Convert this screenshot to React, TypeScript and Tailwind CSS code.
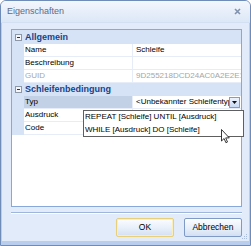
import React from "react";

const FONT = { fontFamily: '"Liberation Sans", Arial, sans-serif' };

function Toggle() {
  return (
    <div className="w-[12px] shrink-0 flex items-center justify-center">
      <div className="w-[7px] h-[7px] border border-[#8c97a8] bg-[#f4f6fa] flex items-center justify-center">
        <div className="w-[3px] h-px bg-[#333]" />
      </div>
    </div>
  );
}

function Category({ label, first }: { label: string; first?: boolean }) {
  return (
    <div className={`flex items-center bg-[#d6e3f6] ${first ? "h-[14px]" : "h-[13px]"}`}>
      <Toggle />
      <span className="pl-[1px] text-[9px] font-bold text-[#15428b] leading-none">{label}</span>
    </div>
  );
}

function Row({
  name,
  value,
  muted,
  selected,
  children,
}: {
  name: string;
  value?: string;
  muted?: boolean;
  selected?: boolean;
  children?: React.ReactNode;
}) {
  return (
    <div className="flex h-[13px]">
      <div className="w-[12px] shrink-0 bg-[#d6e3f6]" />
      <div
        className={`w-[109px] shrink-0 flex items-center pl-[1px] border-r border-b border-[#e6edf8] text-[8px] leading-none ${
          selected ? "bg-[#c3d1e6]" : "bg-white"
        } ${muted ? "text-[#a6a6a6]" : "text-black"}`}
      >
        {name}
      </div>
      <div
        className={`flex-1 min-w-0 flex items-center border-b border-[#e6edf8] text-[8px] leading-none whitespace-nowrap overflow-hidden ${
          muted ? "text-[#a6a6a6]" : "text-black"
        } ${children ? "" : "pl-[3px]"}`}
      >
        {children ?? value}
      </div>
    </div>
  );
}

function Combo() {
  return (
    <div className="flex h-full w-full items-center bg-white">
      <span className="flex-1 min-w-0 overflow-hidden pl-[3px] whitespace-nowrap">
        &lt;Unbekannter Schleifentyp&gt;
      </span>
      <div className="w-[11px] h-[11px] mr-px border border-[#7f9ccb] bg-gradient-to-b from-[#eef4fd] to-[#c9daf3] flex items-center justify-center">
        <svg width="5" height="3" viewBox="0 0 5 3">
          <path d="M0 0h5L2.5 3z" fill="#111" />
        </svg>
      </div>
    </div>
  );
}

function Cursor() {
  return (
    <svg
      className="absolute left-[209px] top-[99px]"
      width="9"
      height="15"
      viewBox="0 0 9 15"
    >
      <path
        d="M0.5 0.5v11.5l2.6-2.5 1.8 4.2 1.6-0.7-1.8-4.1h3.6z"
        fill="#fff"
        stroke="#222"
        strokeWidth="0.9"
        strokeLinejoin="round"
      />
    </svg>
  );
}

function Button({ label, primary }: { label: string; primary?: boolean }) {
  return (
    <button
      className={`w-[58px] h-[19px] rounded-[2px] border text-[8.5px] text-black bg-gradient-to-b from-[#fbfdff] via-[#e9f0fa] to-[#d3e0f2] ${
        primary ? "border-[#e8cf7a] shadow-[inset_0_0_0_1px_#fbeeb8]" : "border-[#7f9ac4]"
      }`}
    >
      {label}
    </button>
  );
}

export default function App() {
  return (
    <div
      className="relative w-[251px] h-[246px] flex flex-col overflow-hidden rounded-t-[6px] border border-[#6f8bb8] bg-[#e1ebfa]"
      style={FONT}
    >
      <div className="h-[22px] shrink-0 flex items-center justify-between pl-[6px] pr-[9px] bg-gradient-to-b from-[#f3f7fd] to-[#dce7f7] border-b border-[#d3e0f4]">
        <span className="text-[9px] text-[#5a6c8a]">Eigenschaften</span>
        <svg width="7" height="7" viewBox="0 0 7 7">
          <path d="M1 1l5 5M6 1l-5 5" stroke="#8091ad" strokeWidth="1.6" />
        </svg>
      </div>

      <div className="flex-1 flex flex-col pl-[9px] pr-[7px] pt-[6px] border-l-[2px] border-r-[2px] border-b-[4px] border-[#b9cdee] -mx-px">
        <div className="relative h-[178px] shrink-0 border border-[#89a8da] bg-white">
          <Category label="Allgemein" first />
          <Row name="Name" value="Schleife" />
          <Row name="Beschreibung" value="" />
          <Row name="GUID" value="9D255218DCD24AC0A2E2E11F" muted />
          <Category label="Schleifenbedingung" />
          <Row name="Typ" selected>
            <Combo />
          </Row>
          <Row name="Ausdruck" value="" />
          <Row name="Code" value="" />

          <div className="absolute left-[71px] top-[80px] w-[161px] h-[27px] border border-[#5f5f5f] bg-white flex flex-col text-[8px] leading-none text-black">
            <div className="h-[13px] flex items-center pl-[1px]">REPEAT [Schleife] UNTIL [Ausdruck]</div>
            <div className="h-[13px] flex items-center pl-[1px]">WHILE [Ausdruck] DO [Schleife]</div>
          </div>
          <Cursor />
        </div>

        <div className="mt-[5px] h-[2px] shrink-0 border-t border-[#9db6de] border-b-white border-b" />

        <div className="mt-[4px] flex justify-end gap-[10px] pr-0">
          <Button label="OK" primary />
          <Button label="Abbrechen" />
        </div>
      </div>

      <svg className="absolute right-[2px] bottom-[5px]" width="7" height="7" viewBox="0 0 7 7">
        <g fill="#a9bcd9">
          <rect x="5" y="1" width="1" height="1" />
          <rect x="3" y="3" width="1" height="1" />
          <rect x="5" y="3" width="1" height="1" />
          <rect x="1" y="5" width="1" height="1" />
          <rect x="3" y="5" width="1" height="1" />
          <rect x="5" y="5" width="1" height="1" />
        </g>
      </svg>
    </div>
  );
}
